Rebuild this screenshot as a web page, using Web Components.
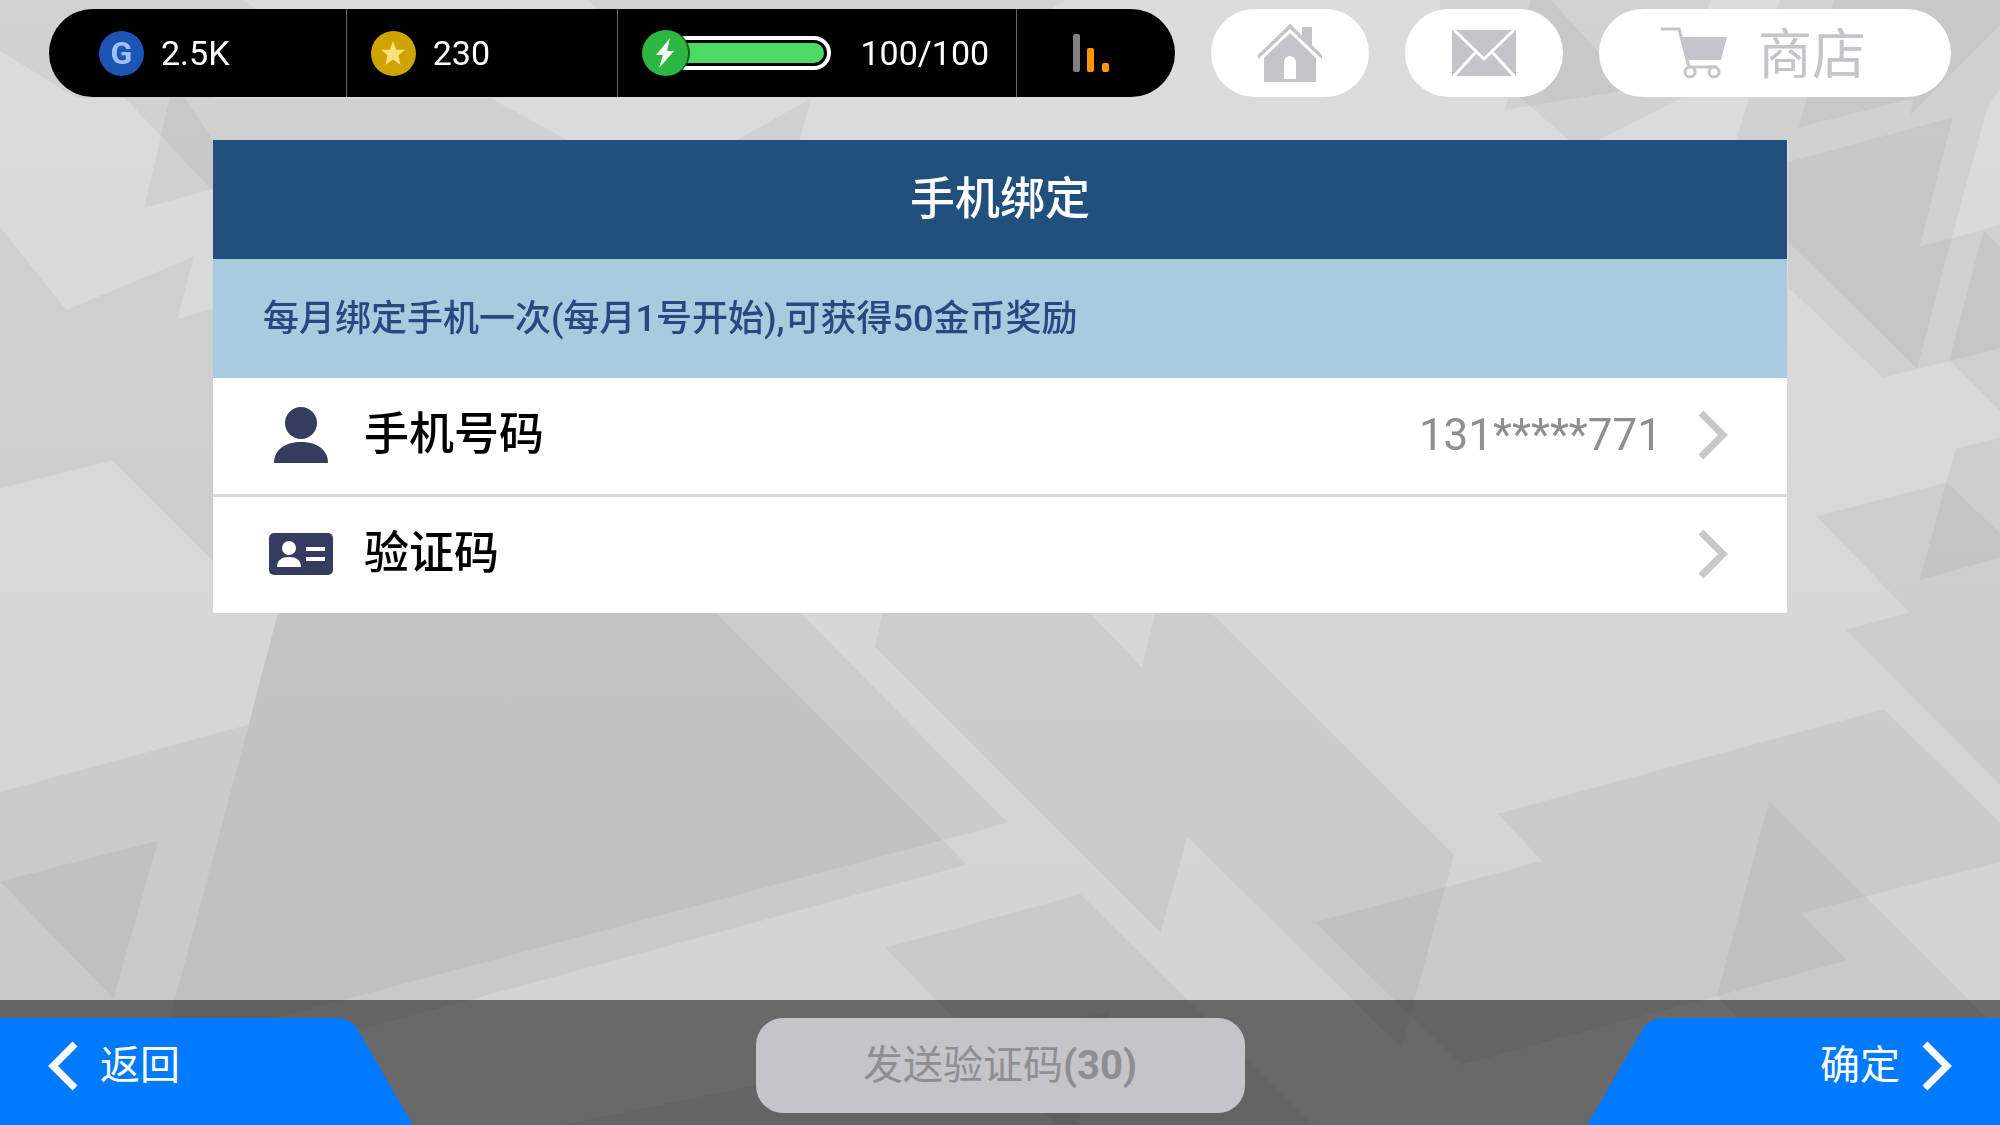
<!DOCTYPE html>
<html lang="zh-CN">
<head>
<meta charset="UTF-8">
<meta name="viewport" content="width=device-width, initial-scale=1">
<title>手机绑定</title>
<style>
  body {
    margin: 0;
    min-height: 100vh;
    display: flex;
    flex-direction: column;
    background: #d6d6d6;
    font-family: Roboto, "Noto Sans CJK SC", sans-serif;
  }
  main { padding: 43px 213px; }
  action-bar { margin-top: auto; }
</style>
</head>
<body>
  <page-backdrop></page-backdrop>

  <top-bar>
    <stat-bar slot="stats">
      <stat-item><coin-icon kind="g"></coin-icon>2.5K</stat-item>
      <stat-item><coin-icon kind="star"></coin-icon>230</stat-item>
      <stat-item><energy-meter value="100" max="100"></energy-meter>100/100</stat-item>
      <stat-item end><signal-bars></signal-bars></stat-item>
    </stat-bar>
    <pill-button icon="home" label="主页"></pill-button>
    <pill-button icon="mail" label="邮件"></pill-button>
    <pill-button icon="cart" wide>商店</pill-button>
  </top-bar>

  <main>
    <bind-panel>
      <span slot="title">手机绑定</span>
      <span slot="notice">每月绑定手机一次(每月1号开始),可获得50金币奖励</span>
      <setting-row icon="person" value="131*****771">手机号码</setting-row>
      <setting-row icon="card">验证码</setting-row>
    </bind-panel>
  </main>

  <action-bar>
    <corner-button slot="back" side="left">返回</corner-button>
    <send-button>发送验证码<b>(30)</b></send-button>
    <corner-button slot="next" side="right">确定</corner-button>
  </action-bar>

<script>
const icons = {
  home: `<svg width="64" height="58" viewBox="0 0 64 58" fill="#c5c4c9">
    <path d="M44 3h10v22L44 14z"/>
    <path d="M32 0 64 31v5L32 6 0 36v-5z"/>
    <path d="M32 4 64 35v4l-6-6L32 9 6 33l-6 6v-4z" fill="#fff"/>
    <path d="M32 0 64 31v4L32 5 0 35v-4z"/>
    <path d="M32 9 58 34v24H6V34z"/>
    <path d="M26 55V38a6 6 0 0 1 12 0v17z" fill="#fff"/>
  </svg>`,
  mail: `<svg width="64" height="46" viewBox="0 0 64 46">
    <path d="M0 0h64v46H0z" fill="#c5c4c9"/>
    <path d="M2 0 32 29 62 0M2 46 24 22M62 46 40 22" fill="none" stroke="#fff" stroke-width="3"/>
  </svg>`,
  cart: `<svg width="66" height="52" viewBox="0 0 66 52" fill="none" stroke="#c5c4c9" stroke-width="3">
    <path d="M0 2h18l10 38h28"/>
    <path d="M20 10h46l-6 23H26z" fill="#c5c4c9" stroke="none"/>
    <circle cx="29" cy="45" r="5" fill="#fff"/><circle cx="53" cy="45" r="5" fill="#fff"/>
  </svg>`,
  person: `<svg width="64" height="56" viewBox="0 0 64 56" fill="#353c5f">
    <circle cx="32" cy="16" r="16"/>
    <path d="M5 56c0-14 12-21 27-21s27 7 27 21z"/>
  </svg>`,
  card: `<svg width="64" height="42" viewBox="0 0 64 42">
    <rect width="64" height="42" rx="5" fill="#353c5f"/>
    <g fill="#fff">
      <circle cx="20" cy="15" r="7"/>
      <path d="M8 34c0-7 5-10 12-10s12 3 12 10z"/>
      <path d="M37 14h19v4H37zM37 24h19v4H37z"/>
    </g>
  </svg>`,
  chevron: `<svg width="30" height="50" viewBox="0 0 30 50" fill="none" stroke="currentColor" stroke-width="7">
    <path d="M3 3 25 25 3 47"/>
  </svg>`
};

function define(name, render) {
  customElements.define(name, class extends HTMLElement {
    connectedCallback() {
      if (this.shadowRoot) return;
      this.attachShadow({ mode: 'open' }).innerHTML = render(this);
    }
  });
}

// Flat grey shards behind everything
define('page-backdrop', () => `
  <style>
    :host { position: fixed; inset: 0; z-index: -1; }
    svg { display: block; width: 100%; height: 100%; }
  </style>
  <svg viewBox="0 0 1568 882" preserveAspectRatio="none" aria-hidden="true">
    <defs>
      <linearGradient id="sky" x2="0" y2="1">
        <stop offset="0" stop-color="#dcdcdc"/>
        <stop offset="1" stop-color="#d2d2d2"/>
      </linearGradient>
    </defs>
    <rect width="1568" height="882" fill="url(#sky)"/>
    <g fill="#000" fill-opacity=".043">
      <!-- left -->
      <path d="M0 0H190L205 10 167 77H98L60 77 0 40z"/>
      <path d="M98 77H385L445 110H167V150z"/>
      <path d="M133 77 113 163 167 148V110L145 77z"/>
      <path d="M0 178 52 243 152 201 139 250 167 242V440L88 361 0 383z"/>
      <path d="M460 0H836L822 8H470zM577 110 636 77 627 110z"/>
      <path d="M0 621 195 568 218 480H627L790 645 224 796 0 860z"/>
      <path d="M218 480H561L758 678 280 808 115 882 137 784 195 568z"/>
      <path d="M0 691 124 659 89 783z"/>
      <!-- centre -->
      <path d="M692 480 686 507 910 731 931 656 1099 822 1140 670 949 480H906L895 523 854 480z"/>
      <path d="M694 743 847 701 1030 882H828z"/>
      <path d="M441 882 870 793 845 882z"/>
      <!-- right -->
      <path d="M1174 638 1477 556 1568 645V676L1412 716 1448 753 1346 781 1145 835 1031 723 1209 675z"/>
      <path d="M1387 628 1568 808V882H1445L1346 781z"/>
      <path d="M1447 494 1497 480 1424 405 1526 378 1533 352 1568 343V615z"/>
      <path d="M1526 378 1568 418V437L1505 455z"/>
      <path d="M1129 0H1341L1320 76 1253 110H1230L1128 20z"/>
      <path d="M1200 0H1216L1280 70 1180 86z"/>
      <path d="M1395 0H1568V70L1558 85 1530 187 1568 176V322L1529 283 1476 296 1402 225V110H1361z"/>
      <path d="M1438 0H1568V20L1498 90 1500 77 1410 100z"/>
      <path d="M1402 127 1531 92 1505 193 1530 187 1503 289 1402 190z"/>
      <path d="M1555 181 1568 193V273L1528 283z"/>
    </g>
  </svg>
`);

define('top-bar', () => `
  <style>
    :host { display: block; }
    header { display: flex; gap: 36px; height: 88px; padding: 9px 49px 0; }
    slot[name="stats"] { display: flex; flex: 1; }
  </style>
  <header><slot name="stats"></slot><slot></slot></header>
`);

define('stat-bar', () => `
  <style>
    :host {
      flex: 1;
      display: grid;
      grid-template-columns: 298fr 272fr 399fr 158fr;
      background: #000;
      border-radius: 44px;
      color: #fff;
      overflow: hidden;
    }
    ::slotted(:first-child) { padding-left: 50px; }
    ::slotted(:not(:last-child)) { border-right: 1px solid #666; }
  </style>
  <slot></slot>
`);

define('stat-item', () => `
  <style>
    :host {
      display: flex;
      align-items: center;
      gap: 17px;
      padding-left: 24px;
      box-sizing: border-box;
      font-size: 34px;
      line-height: 40px;
    }
    :host([end]) { justify-content: flex-end; padding: 0 66px 0 0; }
  </style>
  <slot></slot>
`);

define('coin-icon', el => {
  const star = el.getAttribute('kind') === 'star';
  return `
    <style>
      :host {
        display: flex;
        align-items: center;
        justify-content: center;
        width: 45px;
        height: 45px;
        border-radius: 50%;
        background: ${star ? '#cda400' : '#1c55b5'};
        color: #9cc3ff;
        font-size: 32px;
        font-weight: 700;
      }
    </style>
    ${star
      ? '<svg width="26" height="26" viewBox="0 0 24 24" fill="#ffe07a"><path d="m12 1 3 8h8l-6 5 2 9-7-5-7 5 2-9-6-5h8z"/></svg>'
      : '<span>G</span>'}
  `;
});

define('energy-meter', el => `
  <style>
    :host { display: flex; align-items: center; width: 189px; margin-right: 12px; }
    .bolt {
      display: flex;
      align-items: center;
      justify-content: center;
      width: 46px;
      height: 46px;
      border-radius: 50%;
      background: #2cb742;
      border-right: 2px solid #14601f;
      z-index: 1;
    }
    .track {
      flex: 1;
      height: 20px;
      margin-left: -20px;
      padding: 3px;
      border: 4px solid #fff;
      border-radius: 17px;
    }
    .fill {
      width: ${100 * el.getAttribute('value') / el.getAttribute('max')}%;
      height: 100%;
      border-radius: 10px;
      background: #4cd964;
    }
  </style>
  <div class="bolt">
    <svg width="18" height="30" viewBox="0 0 18 30" fill="#fff"><path d="M14 0 0 17h7L3 30 18 13h-7z"/></svg>
  </div>
  <div class="track" role="meter" aria-label="体力" aria-valuenow="${el.getAttribute('value')}" aria-valuemax="${el.getAttribute('max')}"><div class="fill"></div></div>
`);

define('signal-bars', () => `
  <style>:host { display: flex; }</style>
  <svg width="36" height="38" viewBox="0 0 36 38" aria-hidden="true">
    <rect width="7" height="38" rx="2" fill="#808080"/>
    <rect x="14" y="14" width="7" height="24" rx="2" fill="#ff9500"/>
    <rect x="29" y="29" width="7" height="9" rx="2" fill="#ff9500"/>
  </svg>
`);

define('pill-button', el => `
  <style>
    :host { display: flex; width: 158px; }
    :host([wide]) { width: 352px; }
    button {
      flex: 1;
      display: flex;
      align-items: center;
      justify-content: center;
      gap: 31px;
      padding: 0;
      border: 0;
      border-radius: 44px;
      background: #fff;
      color: #c5c4c9;
      font: 54px/60px Roboto, "Noto Sans CJK SC", sans-serif;
      cursor: pointer;
    }
    :host([wide]) button { justify-content: flex-start; padding-left: 62px; }
    span { padding-top: 6px; }
  </style>
  <button type="button" ${el.hasAttribute('label') ? `aria-label="${el.getAttribute('label')}"` : ''}>
    ${icons[el.getAttribute('icon')]}${el.hasAttribute('wide') ? '<span><slot></slot></span>' : ''}
  </button>
`);

define('bind-panel', () => `
  <style>
    :host { display: block; }
    h1, p {
      display: flex;
      align-items: center;
      box-sizing: border-box;
      height: 119px;
      margin: 0;
      padding: 0 50px 8px;
      font-weight: 500;
    }
    h1 {
      justify-content: center;
      background: #21507f;
      color: #fff;
      font-size: 45px;
    }
    p {
      background: #a7cbdf;
      color: #28497f;
      font-size: 36px;
    }
    .rows { display: grid; gap: 3px; }
  </style>
  <section>
    <h1><slot name="title"></slot></h1>
    <p><slot name="notice"></slot></p>
    <div class="rows"><slot></slot></div>
  </section>
`);

define('setting-row', el => `
  <style>
    :host { display: flex; }
    button {
      flex: 1;
      display: flex;
      align-items: center;
      height: 116px;
      padding: 0 59px 2px 56px;
      border: 0;
      background: #fff;
      color: #000;
      font: 500 45px/60px Roboto, "Noto Sans CJK SC", sans-serif;
      text-align: left;
      cursor: pointer;
    }
    .label { flex: 1; margin-left: 31px; }
    .value { margin-right: 36px; color: #8e8e93; font-size: 44px; font-weight: 400; }
    .arrow { display: flex; color: #c7c7cc; }
  </style>
  <button type="button">
    ${icons[el.getAttribute('icon')]}
    <span class="label"><slot></slot></span>
    <span class="value">${el.getAttribute('value') || ''}</span>
    <span class="arrow">${icons.chevron}</span>
  </button>
`);

define('action-bar', () => `
  <style>
    :host { display: block; }
    footer {
      display: grid;
      grid-template-columns: 1fr auto 1fr;
      padding-top: 18px;
      background: rgba(0, 0, 0, .5);
    }
    .next { display: flex; justify-content: flex-end; }
  </style>
  <footer>
    <div><slot name="back"></slot></div>
    <slot></slot>
    <div class="next"><slot name="next"></slot></div>
  </footer>
`);

define('corner-button', el => `
  <style>
    :host { display: block; width: 413px; }
    button {
      display: flex;
      align-items: center;
      gap: 22px;
      width: 100%;
      height: 107px;
      padding: 0 48px 12px;
      border: 0;
      background: #007aff;
      clip-path: path("M0 0H337Q351 0 358 12L413 107H0z");
      color: #fff;
      font: 40px/48px Roboto, "Noto Sans CJK SC", sans-serif;
      cursor: pointer;
    }
    svg { display: block; }
    :host([side="left"]) svg { transform: scaleX(-1); }
    :host([side="right"]) button {
      flex-direction: row-reverse;
      clip-path: path("M413 0H76Q62 0 55 12L0 107H413z");
    }
  </style>
  <button type="button">${icons.chevron}<span><slot></slot></span></button>
`);

define('send-button', () => `
  <style>
    :host { display: block; width: 489px; }
    button {
      width: 100%;
      height: 95px;
      padding: 0;
      border: 0;
      border-radius: 27px;
      background: #c5c4c8;
      color: #8e8e93;
      font: 40px/48px Roboto, "Noto Sans CJK SC", sans-serif;
    }
  </style>
  <button type="button" disabled><slot></slot></button>
`);
</script>
</body>
</html>
